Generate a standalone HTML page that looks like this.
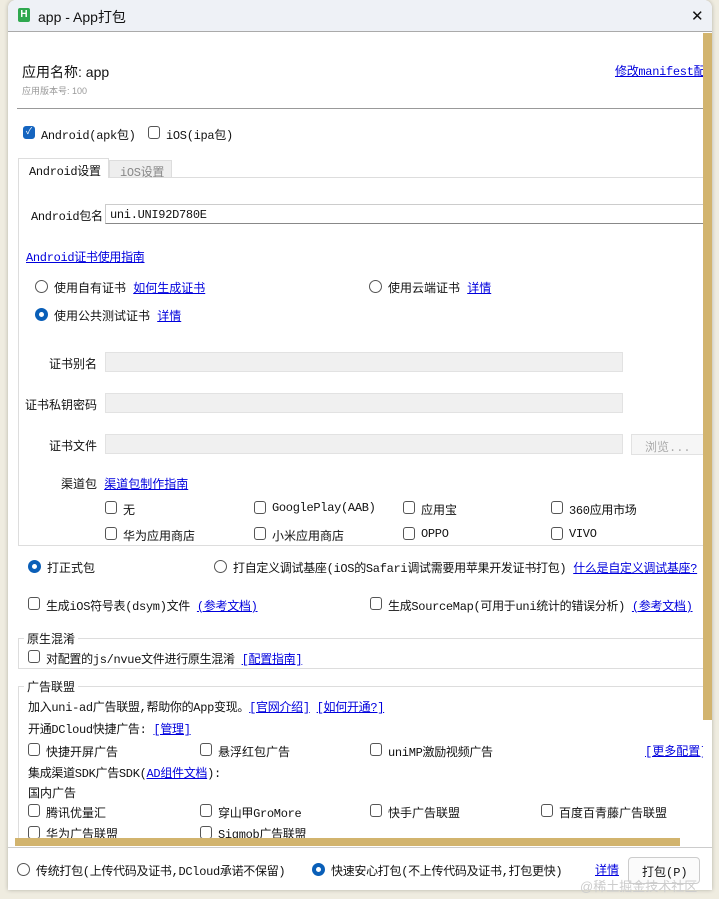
<!DOCTYPE html>
<html><head><meta charset="utf-8"><style>
*{margin:0;padding:0;box-sizing:border-box}
body{width:719px;height:899px;overflow:hidden;background:#efece0;font-family:"Liberation Mono","Noto Sans CJK SC",monospace;font-size:12px;color:#111;position:relative}
.a{position:absolute;white-space:nowrap}
.l{color:#0000dd;text-decoration:underline}
.cb{position:absolute;width:12px;height:13px;border:1px solid #555;border-radius:3px;background:#fff}
.rd{position:absolute;width:13px;height:13px;border:1px solid #555;border-radius:50%;background:#fff}
.rd.on{border:4px solid #0a5fb8}
.in{position:absolute;background:#f0f0f0;border:1px solid #e2e2e2}
.s{font-family:"Liberation Sans","Noto Sans CJK SC",sans-serif}
.m{font-size:12px;letter-spacing:-0.3px}
#clip{position:absolute;left:0;top:0;width:703px;height:838px;overflow:hidden}
</style></head><body>
<div class="a" style="left:8px;top:0;width:704px;height:890px;background:#fff;border-radius:8px 8px 0 0;box-shadow:0 0 4px rgba(0,0,0,.25)"></div>
<div class="a" style="left:8px;top:0;width:704px;height:32px;background:#eef1f6;border-bottom:1px solid #aaa;border-radius:8px 8px 0 0"></div>
<div class="a" style="left:18px;top:8px;width:12px;height:14px;background:#2fa84f;border-radius:2px;color:#fff;font:bold 10px 'Liberation Sans';text-align:center;line-height:14px">H</div>
<div class="a s" style="left:38px;top:7px;font-size:14px">app - App打包</div>
<div class="a s" style="left:691px;top:7px;font-size:15px">✕</div>
<div class="a" style="left:703px;top:33px;width:9px;height:687px;background:#d2b46e"></div>

<div id="clip">
<div class="a s" style="left:22px;top:62px;font-size:14px">应用名称: app</div>
<div class="a s" style="left:22px;top:84px;font-size:9px;color:#999">应用版本号: 100</div>
<div class="a l m" style="left:615px;top:62px">修改manifest配置</div>
<div class="a" style="left:17px;top:108px;width:686px;border-top:1px solid #999"></div>

<div class="cb" style="left:23px;top:126px;background:#1565c0;border-color:#1565c0;color:#fff;font-size:9px;line-height:11px;text-align:center">✓</div>
<div class="a m" style="left:41px;top:126px">Android(apk包)</div>
<div class="cb" style="left:148px;top:126px"></div>
<div class="a m" style="left:166px;top:126px">iOS(ipa包)</div>

<div class="a" style="left:18px;top:177px;width:690px;height:369px;border:1px solid #ddd"></div>
<div class="a m" style="left:18px;top:158px;width:91px;height:20px;background:#fff;border:1px solid #ddd;border-bottom:none;padding:3px 0 0 10px">Android设置</div>
<div class="a m" style="left:109px;top:160px;width:63px;height:18px;background:#eee;border:1px solid #ddd;color:#888;padding:2px 0 0 10px">iOS设置</div>

<div class="a m" style="left:31px;top:207px">Android包名</div>
<div class="a m" style="left:105px;top:204px;width:610px;height:20px;border:1px solid #ccc;border-bottom-color:#888;padding:3px 0 0 4px">uni.UNI92D780E</div>
<div class="a l m" style="left:26px;top:248px">Android证书使用指南</div>
<div class="rd" style="left:35px;top:280px"></div><div class="a" style="left:54px;top:279px">使用自有证书 <span class="l">如何生成证书</span></div>
<div class="rd" style="left:369px;top:280px"></div><div class="a" style="left:388px;top:279px">使用云端证书 <span class="l">详情</span></div>
<div class="rd on" style="left:35px;top:308px"></div><div class="a" style="left:54px;top:307px">使用公共测试证书 <span class="l">详情</span></div>

<div class="a" style="left:49px;top:355px">证书别名</div><div class="in" style="left:105px;top:352px;width:518px;height:20px"></div>
<div class="a" style="left:25px;top:396px">证书私钥密码</div><div class="in" style="left:105px;top:393px;width:518px;height:20px"></div>
<div class="a" style="left:49px;top:437px">证书文件</div><div class="in" style="left:105px;top:434px;width:518px;height:20px"></div>
<div class="a" style="left:631px;top:434px;width:80px;height:21px;border:1px solid #e2e2e2;background:#f6f6f6;color:#aaa;padding:3px 0 0 13px">浏览...</div>
<div class="a" style="left:61px;top:475px">渠道包 <span class="l">渠道包制作指南</span></div>
<div class="cb" style="left:105px;top:501px"></div><div class="a" style="left:123px;top:501px">无</div>
<div class="cb" style="left:254px;top:501px"></div><div class="a m" style="left:272px;top:501px">GooglePlay(AAB)</div>
<div class="cb" style="left:403px;top:501px"></div><div class="a" style="left:421px;top:501px">应用宝</div>
<div class="cb" style="left:551px;top:501px"></div><div class="a m" style="left:569px;top:501px">360应用市场</div>
<div class="cb" style="left:105px;top:527px"></div><div class="a" style="left:123px;top:527px">华为应用商店</div>
<div class="cb" style="left:254px;top:527px"></div><div class="a" style="left:272px;top:527px">小米应用商店</div>
<div class="cb" style="left:403px;top:527px"></div><div class="a m" style="left:421px;top:527px">OPPO</div>
<div class="cb" style="left:551px;top:527px"></div><div class="a m" style="left:569px;top:527px">VIVO</div>

<div class="rd on" style="left:28px;top:560px"></div><div class="a" style="left:47px;top:559px">打正式包</div>
<div class="rd" style="left:214px;top:560px"></div><div class="a m" style="left:233px;top:559px">打自定义调试基座(iOS的Safari调试需要用苹果开发证书打包) <span class="l">什么是自定义调试基座?</span></div>
<div class="cb" style="left:28px;top:597px"></div><div class="a m" style="left:46px;top:597px">生成iOS符号表(dsym)文件 <span class="l">(参考文档)</span></div>
<div class="cb" style="left:370px;top:597px"></div><div class="a m" style="left:388px;top:597px">生成SourceMap(可用于uni统计的错误分析) <span class="l">(参考文档)</span></div>

<div class="a" style="left:18px;top:638px;width:690px;height:31px;border:1px solid #ddd"></div>
<div class="a" style="left:24px;top:630px;background:#fff;padding:0 3px 0 3px">原生混淆</div>
<div class="cb" style="left:28px;top:650px"></div><div class="a m" style="left:46px;top:650px">对配置的js/nvue文件进行原生混淆 <span class="l">[配置指南]</span></div>

<div class="a" style="left:18px;top:686px;width:690px;height:160px;border:1px solid #ddd;border-bottom:none"></div>
<div class="a" style="left:24px;top:678px;background:#fff;padding:0 3px">广告联盟</div>
<div class="a m" style="left:28px;top:698px">加入uni-ad广告联盟,帮助你的App变现。<span class="l">[官网介绍]</span> <span class="l">[如何开通?]</span></div>
<div class="a m" style="left:28px;top:720px">开通DCloud快捷广告: <span class="l">[管理]</span></div>
<div class="cb" style="left:28px;top:743px"></div><div class="a" style="left:46px;top:743px">快捷开屏广告</div>
<div class="cb" style="left:200px;top:743px"></div><div class="a" style="left:218px;top:743px">悬浮红包广告</div>
<div class="cb" style="left:370px;top:743px"></div><div class="a m" style="left:388px;top:743px">uniMP激励视频广告</div>
<div class="a l" style="left:645px;top:742px">[更多配置]</div>
<div class="a m" style="left:28px;top:764px">集成渠道SDK广告SDK(<span class="l">AD组件文档</span>):</div>
<div class="a" style="left:28px;top:784px">国内广告</div>
<div class="cb" style="left:28px;top:804px"></div><div class="a" style="left:46px;top:804px">腾讯优量汇</div>
<div class="cb" style="left:200px;top:804px"></div><div class="a m" style="left:218px;top:804px">穿山甲GroMore</div>
<div class="cb" style="left:370px;top:804px"></div><div class="a" style="left:388px;top:804px">快手广告联盟</div>
<div class="cb" style="left:541px;top:804px"></div><div class="a" style="left:559px;top:804px">百度百青藤广告联盟</div>
<div class="cb" style="left:28px;top:826px"></div><div class="a" style="left:46px;top:825px">华为广告联盟</div>
<div class="cb" style="left:200px;top:826px"></div><div class="a m" style="left:218px;top:825px">Sigmob广告联盟</div>
</div>
<div class="a" style="left:8px;top:838px;width:704px;height:52px;background:#fff"></div>
<div class="a" style="left:15px;top:838px;width:665px;height:8px;background:#d2b46e"></div>
<div class="a" style="left:8px;top:847px;width:704px;border-top:1px solid #ccc"></div>

<div class="rd" style="left:17px;top:863px"></div><div class="a m" style="left:36px;top:862px">传统打包(上传代码及证书,DCloud承诺不保留)</div>
<div class="rd on" style="left:312px;top:863px"></div><div class="a m" style="left:331px;top:862px">快速安心打包(不上传代码及证书,打包更快)</div>
<div class="a l" style="left:595px;top:861px">详情</div>
<div class="a" style="left:628px;top:857px;width:72px;height:27px;border:1px solid #ccc;border-radius:4px;background:#fbfbfb;padding:5px 0 0 13px">打包(P)</div>
<div class="a s" style="left:580px;top:876px;color:#ccc;font-size:13px">@稀土掘金技术社区</div>
</body></html>
